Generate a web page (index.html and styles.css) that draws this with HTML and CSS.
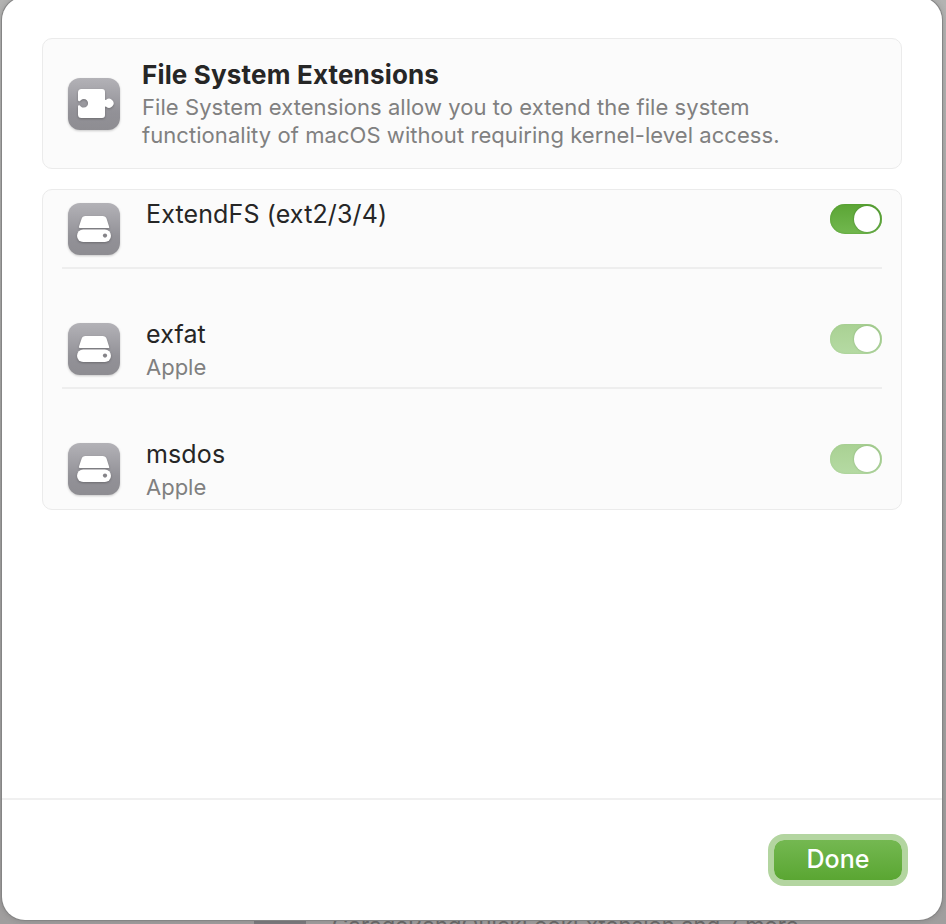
FILE: index.html
```html
<!DOCTYPE html>
<html lang="en">
<head>
<meta charset="utf-8">
<title>File System Extensions</title>
<link rel="stylesheet" href="styles.css">
</head>
<body>
<svg width="0" height="0" class="defs">
  <defs>
    <linearGradient id="tile" x1="0" y1="0" x2="0" y2="1"><stop offset="0" stop-color="#b3b2b7"/><stop offset="0.65" stop-color="#929197"/><stop offset="1" stop-color="#8e8d92"/></linearGradient>
    <symbol id="drive" viewBox="0 0 52 52">
      <rect width="52" height="52" rx="12" fill="url(#tile)"/>
      <g class="glyph">
        <path d="M17.400 13h17.200c2 0 3.300.9 4 2.700l2.600 8.200c.2.700-.1 1.100-.8 1.100H11.800c-.8 0-1.100-.5-.9-1.200l2.700-8.100c.7-1.800 1.800-2.700 3.800-2.700z" fill="#fff"/>
        <rect x="9" y="26.500" width="34" height="12.500" rx="6.200" fill="#fff"/>
      </g>
      <circle cx="37" cy="32.600" r="2.100" fill="#858489"/>
    </symbol>
    <symbol id="puzzle" viewBox="0 0 52 52">
      <rect width="52" height="52" rx="12" fill="url(#tile)"/>
      <path class="glyph" fill="#fff" d="M13.500 11H34a3 3 0 0 1 3 3v7.200c0 .8.500 1 1.200.6a4.500 4.500 0 1 1 0 7c-.7-.5-1.200-.3-1.200.5V37a3 3 0 0 1-3 3H13.500a3.500 3.500 0 0 1-3.500-3.500v-8c0-1 1.100-1.500 2-.8l.8.700a4.300 4.300 0 1 0 0-6.200l-.8.700c-.9.700-2 .2-2-.8v-7.600a3.500 3.500 0 0 1 3.500-3.500z"/>
    </symbol>
  </defs>
</svg>
<div class="behind"><span class="tile-behind"></span><span class="text-behind">GarageBandQuickLookExtension and 7 more</span></div>
<main class="sheet">
  <section class="content">
    <header class="card intro">
      <svg class="icon"><use href="#puzzle"/></svg>
      <div>
        <h1>File System Extensions</h1>
        <p class="desc">File System extensions allow you to extend the file system<br>functionality of macOS without requiring kernel-level access.</p>
      </div>
    </header>
    <div class="card list">
      <div class="row first">
        <svg class="icon"><use href="#drive"/></svg>
        <div class="label"><div class="name">ExtendFS (ext2/3/4)</div></div>
        <span class="switch" role="switch" aria-checked="true"></span>
      </div>
      <div class="row">
        <svg class="icon"><use href="#drive"/></svg>
        <div class="label"><div class="name">exfat</div><div class="vendor">Apple</div></div>
        <span class="switch dim" role="switch" aria-checked="true"></span>
      </div>
      <div class="row last">
        <svg class="icon"><use href="#drive"/></svg>
        <div class="label"><div class="name">msdos</div><div class="vendor">Apple</div></div>
        <span class="switch dim" role="switch" aria-checked="true"></span>
      </div>
    </div>
  </section>
  <footer class="footer"><button class="done">Done</button></footer>
</main>
</body>
</html>
```
FILE: styles.css
```css
* { box-sizing: border-box; }
html, body { margin: 0; height: 924px; overflow: hidden; }
body {
  background: linear-gradient(180deg, #b3b3b2, #a4a4a3 50%, #a09e9e);
  font-family: Inter, "Liberation Sans", sans-serif;
  color: #262626;
}
.defs { position: absolute; }
.behind { position: absolute; inset: 0; overflow: hidden; }
.tile-behind {
  position: absolute; left: 254px; top: 880px; width: 52px; height: 52px; background: #7c7b7e;
}
.text-behind {
  position: absolute; left: 332px; top: 911px; font-size: 22px; line-height: 28px;
  letter-spacing: .06px; white-space: nowrap; color: #6b6a6a;
}
.sheet {
  position: relative;
  display: flex; flex-direction: column;
  width: 940px; height: 923px; margin: -3px 0 0 2px;
  border-radius: 23px;
  background: #fff;
  box-shadow: 0 0 0 1px #858585, 0 0 6px rgba(0,0,0,.2);
}
.content { flex: 1; padding: 41px 40px 0; }
.card { border: 1px solid #ebebeb; border-radius: 10px; background: #fbfbfb; }
.intro { display: flex; gap: 22px; height: 131px; padding: 21px 25px; }
.icon { display: block; flex: none; width: 52px; height: 52px; overflow: visible; filter: drop-shadow(0 1px 1px rgba(0,0,0,.2)); }
.glyph { filter: drop-shadow(0 1px .8px rgba(0,0,0,.25)); }
.intro .icon { margin-top: 18px; }
h1 { margin: 0; font-size: 26px; line-height: 30px; font-weight: 700; letter-spacing: .17px; white-space: nowrap; }
.desc { margin: 3px 0 0; font-size: 22px; line-height: 28px; color: #808080; white-space: nowrap; letter-spacing: .06px; }
.list { height: 321px; margin-top: 20px; padding: 0 19px; }
.row { display: flex; height: 120px; padding: 54px 0 0 6px; border-bottom: 2px solid #eeeeee; }
.first { height: 79px; padding-top: 13px; }
.last { border-bottom: 0; }
.label { flex: 1; margin: -5px 0 0 26px; }
.name { font-size: 25px; line-height: 32px; letter-spacing: .13px; white-space: nowrap; }
.vendor { font-size: 22px; line-height: 28px; margin-top: 3px; color: #808080; }
.switch {
  display: flex; justify-content: flex-end; width: 52px; height: 30px; margin-top: 1px; padding: 2px;
  border-radius: 15px; background: linear-gradient(#5ba535, #72b84f);
  box-shadow: inset 0 0 2px #4f972c;
}
.switch::after { content: ""; width: 26px; height: 26px; border-radius: 50%; background: #fff; box-shadow: 0 0 2px rgba(0,60,0,.45); }
.dim { background: linear-gradient(#a9d193, #b5daa3); box-shadow: inset 0 0 2px #a0ca8c; }
.dim::after { box-shadow: 0 0 2px rgba(0,60,0,.25); }
.footer { display: flex; justify-content: flex-end; height: 122px; padding: 40px 40px 0; border-top: 2px solid #f0f0f0; }
.done {
  width: 128px; height: 40px; margin: 0; padding: 0 0 2px; border: 0; border-radius: 10px;
  background: linear-gradient(#74b851, #5aa632); color: #fff;
  font: 500 25px/38px Inter, "Liberation Sans", sans-serif;
  box-shadow: 0 0 0 6px #b3d5a0;
}
```
